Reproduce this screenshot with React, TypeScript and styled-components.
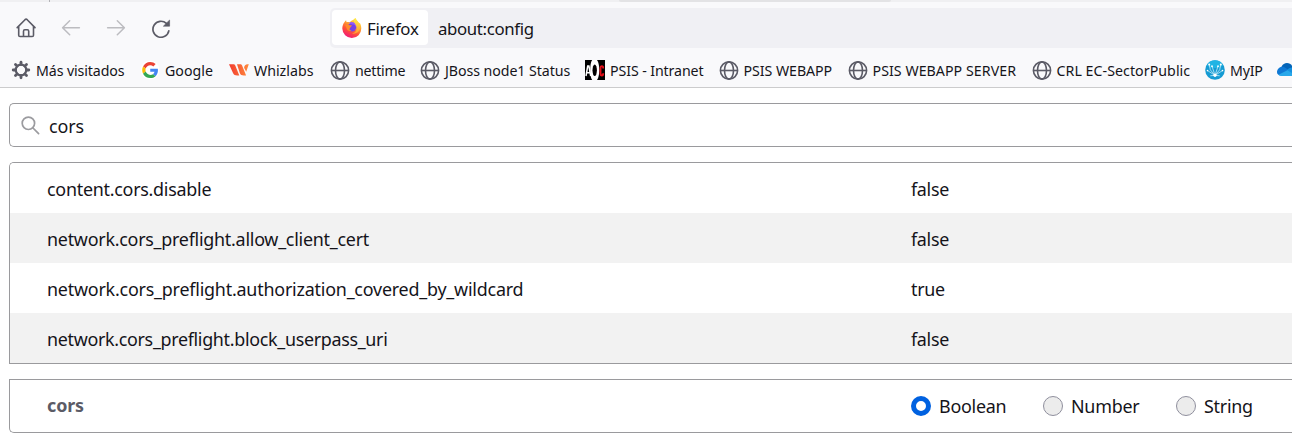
import React from "react";
import styled, { createGlobalStyle } from "styled-components";

const Global = createGlobalStyle`
  *, *::before, *::after { box-sizing: border-box; }
  html, body { margin: 0; height: 100%; overflow: hidden; background: #fff; }
  body { font-family: "Noto Sans", "Open Sans", sans-serif; color: #15141a; }
`;

const Browser = styled.div`
  width: 1292px;
  height: 441px;
  overflow: hidden;
  display: flex;
  flex-direction: column;
`;

const Text = styled.span<{ $track?: number }>`
  letter-spacing: ${(p) => p.$track ?? 0}px;
  white-space: nowrap;
`;

const TabStrip = styled.div`
  height: 2px;
  flex: none;
  display: flex;
  background: #f0f0f2;
`;
const TabGap = styled.div<{ $w: number }>`
  width: ${(p) => p.$w}px;
`;
const TabDivider = styled.div`
  width: 1px;
  background: #b4b4b8;
`;
const HoveredTab = styled.div`
  width: 272px;
  background: #e3e3e5;
  border-radius: 0 0 4px 4px;
`;

const Toolbar = styled.div`
  height: 51px;
  flex: none;
  display: flex;
  align-items: center;
  background: #f9f9fb;
  padding-left: 15.5px;
`;
const NavButtons = styled.div`
  display: flex;
  gap: 25.3px;
  width: 314.5px;
  padding-top: 1px;
  svg { display: block; }
`;
const UrlBar = styled.div`
  flex: 1;
  height: 40px;
  padding: 3px 2px;
  display: flex;
  align-items: center;
  background: #f0f0f4;
  border-radius: 5px 0 0 5px;
  font-size: 16.8px;
  & > span, & > div > span { padding-top: 2px; }
`;
const Identity = styled.div`
  width: 96px;
  height: 35px;
  padding-left: 10px;
  margin-right: 10px;
  display: flex;
  align-items: center;
  gap: 5px;
  background: #fff;
  border-radius: 4px;
`;

const Bookmarks = styled.div`
  height: 35px;
  flex: none;
  display: flex;
  align-items: center;
  padding-left: 11px;
  background: #f9f9fb;
  border-bottom: 1px solid #cccccd;
  font-size: 14.2px;
  line-height: 20px;
`;
const Bookmark = styled.div<{ $w: number }>`
  width: ${(p) => p.$w}px;
  flex: none;
  display: flex;
  align-items: center;
  gap: 5px;
  svg { display: block; flex: none; }
  span { padding-top: 2px; }
`;

const Page = styled.main`
  flex: 1;
  padding: 15px 0 0 9px;
  font-size: 17.9px;
  background: #fff;
`;
const SearchBox = styled.div`
  height: 44px;
  padding-left: 11px;
  display: flex;
  align-items: center;
  gap: 9px;
  border: 1px solid #9a9a9d;
  border-right: 0;
  border-radius: 5px 0 0 5px;
  span { padding-top: 2px; }
`;
const Prefs = styled.div`
  margin-top: 15px;
  border: 1px solid #9a9a9d;
  border-right: 0;
  border-radius: 5px 0 0 0;
  overflow: hidden;
`;
const Row = styled.div<{ $shade?: boolean }>`
  height: 50px;
  padding: 2px 0 0 37px;
  display: flex;
  align-items: center;
  background: ${(p) => (p.$shade ? "#f2f2f2" : "#fff")};
`;
const Name = styled.div<{ $bold?: boolean }>`
  width: 864px;
  flex: none;
  padding-bottom: ${(p) => (p.$bold ? 2 : 0)}px;
  font-weight: ${(p) => (p.$bold ? 700 : 400)};
  color: ${(p) => (p.$bold ? "#5b5b66" : "inherit")};
`;
const AddRow = styled(Row)`
  height: 54px;
  margin-top: 15px;
  padding-top: 0;
  border: 1px solid #9a9a9d;
  border-right: 0;
  border-radius: 0 0 0 5px;
`;
const Option = styled.label<{ $w: number }>`
  width: ${(p) => p.$w}px;
  flex: none;
  display: flex;
  align-items: center;
  gap: 8px;
`;
const Radio = styled.span<{ $on?: boolean }>`
  width: 20px;
  height: 20px;
  flex: none;
  border-radius: 50%;
  border: ${(p) => (p.$on ? "5px solid #0061e0" : "1px solid #8f8f9d")};
  background: ${(p) => (p.$on ? "#fff" : "#ececec")};
`;

const Home = () => (
  <svg width="20" height="20" viewBox="0 0 20 20" fill="none" stroke="#5b5b66" strokeWidth="1.6" strokeLinejoin="round" strokeLinecap="round">
    <path d="M1.2 9.6 9 1.7a1.6 1.6 0 0 1 2.2 0L19 9.6M2.7 8.4v8.8c0 .8.5 1.3 1.3 1.3h12.2c.8 0 1.3-.5 1.3-1.3V8.4M7.5 18.3v-5.1c0-.8.5-1.4 1.3-1.4h2.6c.8 0 1.3.6 1.3 1.4v5.1" />
  </svg>
);
const Arrow = ({ right }: { right?: boolean }) => (
  <svg width="20" height="20" viewBox="0 0 20 20" fill="none" stroke="#bcbcc0" strokeWidth="1.5" strokeLinecap="round" strokeLinejoin="round">
    <path d={right ? "M1.6 9.8h16.6M11.3 2.7l7.1 7.1-7.1 7" : "M18.4 9.8H1.8M8.7 2.7 1.6 9.8l7.1 7"} />
  </svg>
);
const Reload = () => (
  <svg width="20" height="20" viewBox="0 0 20 20">
    <path d="M17.8 12.8A8 8 0 1 1 15.4 5.400" fill="none" stroke="#5b5b66" strokeWidth="1.7" strokeLinecap="round" />
    <path d="M18.6 2v6.200h-6.200z" fill="#5b5b66" stroke="#5b5b66" strokeWidth=".6" strokeLinejoin="round" />
  </svg>
);
const Firefox = () => (
  <svg width="20" height="20" viewBox="0 0 20 20">
    <defs>
      <linearGradient id="fxBody" x1=".8" y1="0" x2=".3" y2="1">
        <stop offset="0" stopColor="#fff44f" />
        <stop offset=".35" stopColor="#ffa930" />
        <stop offset=".65" stopColor="#ff5336" />
        <stop offset="1" stopColor="#f0157d" />
      </linearGradient>
      <linearGradient id="fxTail" x1=".5" y1="0" x2=".5" y2="1">
        <stop offset="0" stopColor="#fff04a" />
        <stop offset="1" stopColor="#ff9a35" />
      </linearGradient>
    </defs>
    <path d="M2.600 4.100C3 3.200 3.600 2.700 4.100 2.300c0 .8.2 1.400.6 1.900 1-.2 2-.1 2.900.3C8.800 2.800 10 2.200 11.200 2c.8-1 1.400-1.500 2.400-2 .3 2 1.700 2.800 2.800 4.200.3.4.6.9.8 1.300l.5-.7c1.100 1.700 1.600 3.700 1.600 5.600a9.500 9.500 0 0 1-19 .2c0-2.600.9-4.800 2.300-6.500z" fill="url(#fxBody)" />
    <circle cx="10" cy="9.300" r="4.200" fill="#7542e5" />
    <path d="M6.800 4.800c2.200-1.400 5.900-.7 7.200 1.600 1.200 2 .7 4.200-.5 5.600 1.800-3.100-.7-5.900-3.200-5.500z" fill="#9059ff" />
    <path d="M3.300 7.300c1.300-1 3.300-.8 4.200-.1.8.2 2.100-.1 2.700.4-.4 1-1.800 1.100-2 2.400-1.400.8-.6 2.700 1.500 2.400-2.300 1.500-5.100.1-5.200-2.600z" fill="#ff8a2b" />
    <path d="M13.600 0c.3 2 1.800 2.800 2.800 4.200 2.500 3.300 2.300 7.500-.7 10.100-1.800 1.500-4.300 1.700-5.700 1 3.400-.3 4.900-2.500 4.600-5.700-.2-2.400-1.700-3.600-2.400-5.100-.7-1.600.3-3.200 1.400-4.500z" fill="url(#fxTail)" />
  </svg>
);
const Gear = () => (
  <svg width="20" height="20" viewBox="0 0 20 20" fill="none" stroke="#5b5b66">
    <circle cx="10" cy="10" r="5.3" strokeWidth="2.300" />
    {[0, 45, 90, 135, 180, 225, 270, 315].map((a) => (
      <path key={a} d="M10 4.500V2.200" strokeWidth="2.800" strokeLinecap="round" transform={`rotate(${a} 10 10)`} />
    ))}
  </svg>
);
const Google = () => (
  <svg width="20" height="20" viewBox="0 0 20 20">
    <circle cx="10" cy="10" r="9.5" fill="#fff" />
    <g transform="translate(2.2 2) scale(.335)">
      <path fill="#EA4335" d="M24 9.5c3.5 0 6.700 1.200 9.200 3.600l6.900-6.900C35.900 2.400 30.500 0 24 0 14.600 0 6.500 5.400 2.600 13.200l8 6.200C12.400 13.700 17.700 9.500 24 9.500z" />
      <path fill="#4285F4" d="M47 24.500c0-1.600-.2-3.100-.4-4.500H24v9h12.900c-.6 3-2.300 5.500-4.800 7.200l7.700 6C44.400 38 47 31.800 47 24.500z" />
      <path fill="#FBBC05" d="M10.500 28.600c-.5-1.500-.8-3-.8-4.600s.3-3.100.8-4.600l-8-6.200C.9 16.500 0 20.100 0 24s.9 7.500 2.600 10.800z" />
      <path fill="#34A853" d="M24 48c6.500 0 11.900-2.100 15.900-5.800l-7.700-6c-2.200 1.500-4.900 2.300-8.200 2.300-6.300 0-11.600-4.200-13.500-9.900l-8 6.200C6.500 42.600 14.600 48 24 48z" />
    </g>
  </svg>
);
const Whizlabs = () => (
  <svg width="20" height="20" viewBox="0 0 20 20">
    <defs>
      <linearGradient id="wz" x1="0" x2="1">
        <stop offset="0" stopColor="#f23b2f" />
        <stop offset="1" stopColor="#ff8a3c" />
      </linearGradient>
    </defs>
    <path d="M0 4.200h4.300c1 0 1.600.4 2 1.300l4 10H8.200c-2.100 0-3.300-.7-4.200-2.500zM8 4.200h3.200c1 0 1.500.4 1.900 1.300l4 10h-2.300c-2.100 0-3.200-.7-4-2.500zM15.100 7.800c.3-2.300 1.300-3.600 3.500-3.600h1.200l-2.600 7.600z" fill="url(#wz)" />
  </svg>
);
const Globe = () => (
  <svg width="20" height="20" viewBox="0 0 20 20" fill="none" stroke="#5b5b66" strokeWidth="1.600">
    <circle cx="10" cy="10.500" r="8.600" />
    <ellipse cx="10" cy="10.500" rx="4.500" ry="8.600" />
    <path d="M1.500 10.500h17" />
  </svg>
);
const Aoc = () => (
  <svg width="20" height="20" viewBox="0 0 20 20">
    <path d="M0 0h20v20H0z" fill="#000" />
    <path d="M7.200 0h4.800c1.500 2 2.300 5.800 2.300 10s-.8 8-2.300 10H7.200c-1.500-2-2-5.800-2-10s.5-8 2-10z" fill="#fff" />
    <ellipse cx="9.700" cy="10.300" rx="2.200" ry="5.800" fill="#000" />
    <path d="M1 16 2.700 6h1.200L5.700 16M1.800 12.800h3.300" fill="none" stroke="#fff" strokeWidth="1.500" />
    <path d="M18.200 8.400c0-1.500-.4-2.300-1.300-2.300s-1.400.8-1.400 2.300v4.800c0 1.500.5 2.300 1.400 2.300s1.300-.8 1.300-2.300" fill="none" stroke="#e40d18" strokeWidth="1.900" />
  </svg>
);
const MyIp = () => (
  <svg width="20" height="20" viewBox="0 0 20 20">
    <circle cx="10" cy="10" r="9.800" fill="#159bd3" />
    <path d="M2 5.200C3.400 2.300 6.300.3 10 .3s6.600 2 8 4.900L14.500 8H5.400z" fill="#21b4e4" />
    <g fill="none" stroke="#d9f3fc" strokeWidth=".7">
      <path d="M4.200 4.600 5.300 9.800 10 15.300l4.700-5.500 1.100-5.200M7 6.200l3 9.100 3-9.100M2.500 10.600 10 15.300l7.500-4.700M5.300 15.800 10 15.300l4.700.5" />
    </g>
    <g fill="#fff">
      <circle cx="4.200" cy="4.600" r="1" /><circle cx="15.800" cy="4.600" r="1" />
      <circle cx="7" cy="6.200" r=".9" /><circle cx="13" cy="6.200" r=".9" />
      <circle cx="2.500" cy="10.600" r=".8" /><circle cx="17.500" cy="10.600" r=".8" />
      <circle cx="10" cy="15.300" r="1.600" />
    </g>
  </svg>
);
const OneDrive = () => (
  <svg width="20" height="20" viewBox="0 0 20 20">
    <path d="M4.500 6.800C5.600 4.200 7.700 3 10 3c3 0 5.300 1.800 6 4.700L12 12z" fill="#0364b8" />
    <path d="M0 12.300c0-3 2.300-5.500 5.200-5.500 1.500 0 2.300.5 3.400 1.100L15 12l-12 3.500C1.300 15 0 14 0 12.300z" fill="#0f78d4" />
    <path d="M10 10.300c1.500-2 3.500-3 6-2.700 2.400.2 4 2 4 4.200v4.200H9z" fill="#1490df" />
    <path d="M1.500 14.800 10.400 10.300 20 16H4.400c-1.200 0-2.100-.4-2.900-1.200z" fill="#28a8ea" />
  </svg>
);
const SearchIcon = () => (
  <svg width="19" height="19" viewBox="0 0 19 19" fill="none" stroke="#9b9b9f" strokeWidth="1.700" strokeLinecap="round">
    <circle cx="7.400" cy="7.300" r="6.200" />
    <path d="m12 12 5.600 5.700" />
  </svg>
);

const bookmarks: { icon: React.ReactNode; label: string; w: number; track: number }[] = [
  { icon: <Gear />, label: "Más visitados", w: 129, track: -0.1 },
  { icon: <Google />, label: "Google", w: 89, track: 0 },
  { icon: <Whizlabs />, label: "Whizlabs", w: 101, track: 0 },
  { icon: <Globe />, label: "nettime", w: 90, track: -0.25 },
  { icon: <Globe />, label: "JBoss node1 Status", w: 165, track: -0.07 },
  { icon: <Aoc />, label: "PSIS - Intranet", w: 133.5, track: -0.1 },
  { icon: <Globe />, label: "PSIS WEBAPP", w: 129, track: -0.05 },
  { icon: <Globe />, label: "PSIS WEBAPP SERVER", w: 184, track: 0.05 },
  { icon: <Globe />, label: "CRL EC-SectorPublic", w: 173.5, track: 0.05 },
  { icon: <MyIp />, label: "MyIP", w: 72, track: -0.2 },
  { icon: <OneDrive />, label: "", w: 20, track: 0 },
];

const prefs = [
  { name: "content.cors.disable", value: "false", track: -0.26 },
  { name: "network.cors_preflight.allow_client_cert", value: "false", track: -0.25 },
  { name: "network.cors_preflight.authorization_covered_by_wildcard", value: "true", track: -0.21 },
  { name: "network.cors_preflight.block_userpass_uri", value: "false", track: -0.31 },
];

export default function App() {
  return (
    <Browser>
      <Global />
      <TabStrip>
        <TabGap $w={49} />
        <TabDivider />
        <TabGap $w={569} />
        <HoveredTab />
      </TabStrip>
      <Toolbar>
        <NavButtons>
          <Home />
          <Arrow />
          <Arrow right />
          <Reload />
        </NavButtons>
        <UrlBar>
          <Identity>
            <Firefox />
            <Text $track={-0.3}>Firefox</Text>
          </Identity>
          <Text $track={-0.35}>about:config</Text>
        </UrlBar>
      </Toolbar>
      <Bookmarks>
        {bookmarks.map((b, i) => (
          <Bookmark key={i} $w={b.w}>
            {b.icon}
            {b.label && <Text $track={b.track}>{b.label}</Text>}
          </Bookmark>
        ))}
      </Bookmarks>
      <Page>
        <SearchBox>
          <SearchIcon />
          <Text $track={-0.1}>cors</Text>
        </SearchBox>
        <Prefs>
          {prefs.map((p, i) => (
            <Row key={p.name} $shade={i % 2 === 1}>
              <Name><Text $track={p.track}>{p.name}</Text></Name>
              <Text $track={-0.3}>{p.value}</Text>
            </Row>
          ))}
        </Prefs>
        <AddRow>
          <Name $bold><Text $track={-0.1}>cors</Text></Name>
          <Option $w={132}><Radio $on /><Text $track={-0.25}>Boolean</Text></Option>
          <Option $w={133}><Radio /><Text $track={-0.25}>Number</Text></Option>
          <Option $w={90}><Radio /><Text $track={-0.25}>String</Text></Option>
        </AddRow>
      </Page>
    </Browser>
  );
}
